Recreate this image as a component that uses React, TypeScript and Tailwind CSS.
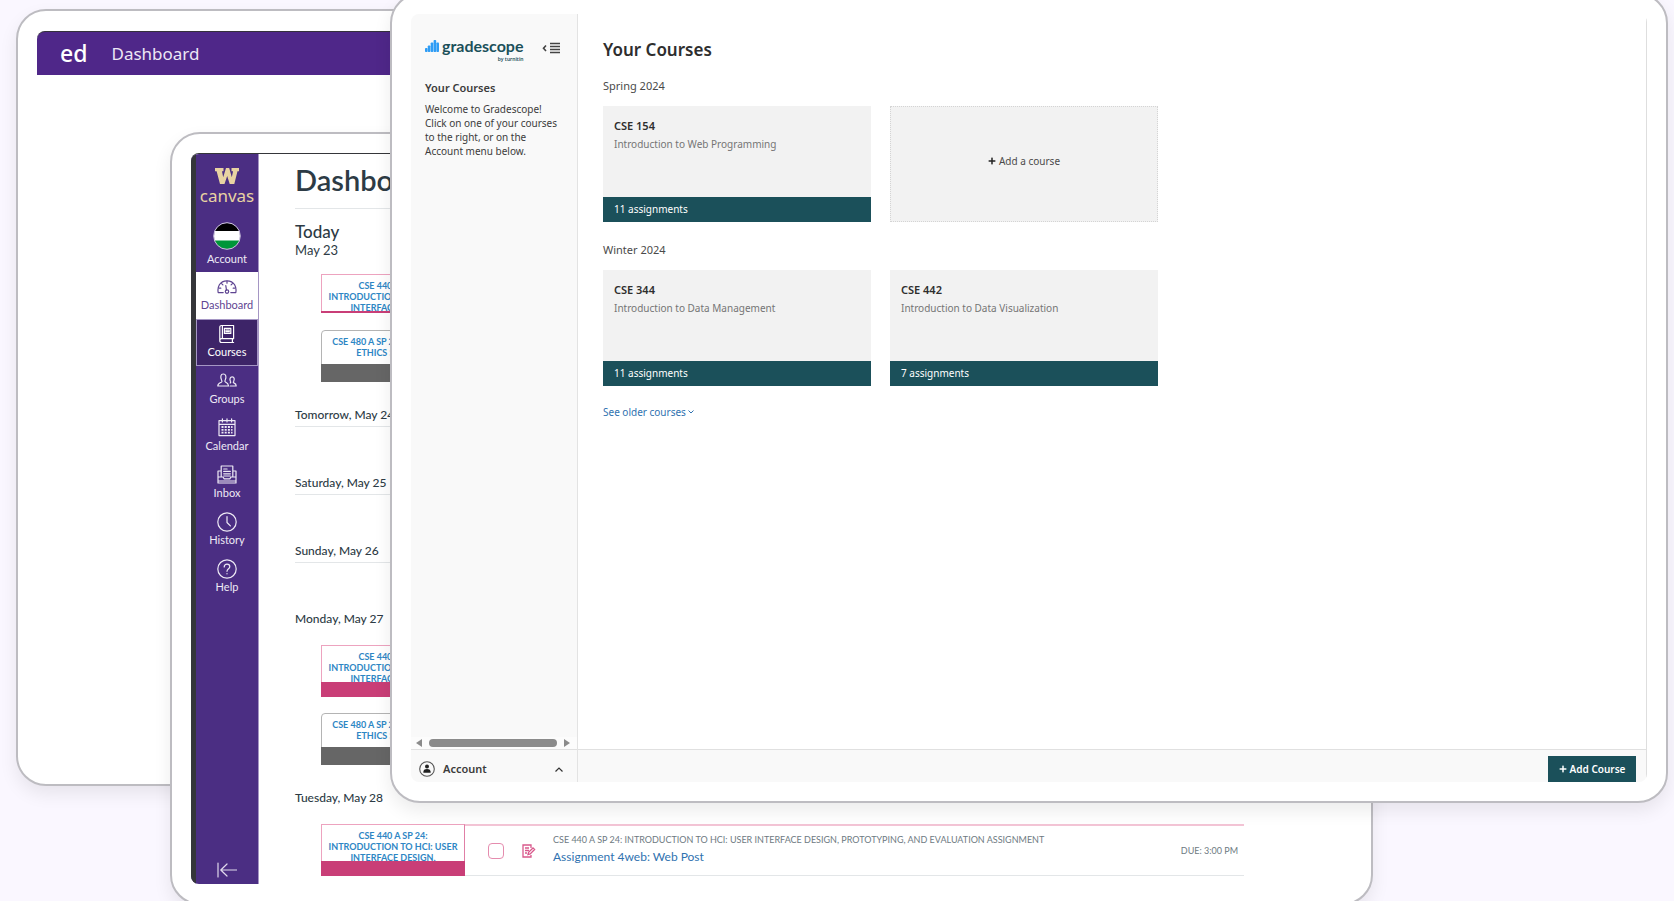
import type { ReactNode } from "react";
import { FaPlus } from "react-icons/fa";

const stroke = {
  fill: "none",
  stroke: "currentColor",
  strokeWidth: 1.2,
  strokeLinecap: "round" as const,
  strokeLinejoin: "round" as const,
};

function Glyph({ children }: { children: ReactNode }) {
  return (
    <svg viewBox="0 0 20 20" className="size-5" aria-hidden="true" {...stroke}>
      {children}
    </svg>
  );
}

const icons: Record<string, ReactNode> = {
  Dashboard: (
    <Glyph>
      <path d="M6.2 15.6H1.2C.2 10.500 2.400 3.800 10 3.800s9.800 6.700 8.800 11.800h-5" />
      <path d="M10 4v2.200M4.600 6.600l1.300 1.300M15.400 6.600l-1.300 1.300M2.400 11.200h1.400M17.600 11.200h-1.400M8.800 8.600l.7 4.600" />
      <circle cx="10" cy="14.600" r="1.700" />
    </Glyph>
  ),
  Courses: (
    <Glyph>
      <path d="M4.600 1.500h12v13.200H4.600a1.800 1.800 0 0 0-1.800 1.800V3.200c0-1 .8-1.700 1.800-1.700ZM2.800 16.500c0 1.200.8 2 1.800 2h12M15.400 14.700v3.800M5.400 1.500v13.200" />
      <path d="M7.400 4.400h6.400v5H7.400zM8.800 6.200h3.600M8.800 7.700h3.600" />
    </Glyph>
  ),
  Groups: (
    <Glyph>
      <path d="M11.600 15H.8c0-2.800 1.600-3 3.600-3.800 1-.5.6-1.400.2-2.200C3.200 6 3.600 3 6.300 3S9.600 6 8.200 9c-.4.800-.6 1.600.3 2.100 1.300.6 2.600.9 3.100 3.900Z" />
      <path d="M13.200 15h6c0-2.200-1-2.400-2.300-3-.9-.4-.6-1.100-.2-1.700 1-2.200.6-4.400-1.500-4.400s-2.800 2.200-1.800 4.400c.3.600.6 1.300-.2 1.700" />
    </Glyph>
  ),
  Calendar: (
    <Glyph>
      <path d="M2 2.600h16v15H2zM2 6.400h16M5.400 .8v3.100M10 .8v3.100M14.600 .8v3.100" />
      <path d="M4.500 9h11M4.500 11.800h11M4.500 14.700h11" strokeDasharray="2 1.200" strokeWidth="1.800" strokeLinecap="butt" />
    </Glyph>
  ),
  Inbox: (
    <Glyph>
      <path d="M4.200 12V1h11.600v11M4.200 6H1v12h18V6h-3.200M1 12h5l1.200 1.800h5.600L14 12h5M1 16h18" />
      <path d="M6.700 4h3.400M6.700 6.400h6.600M6.700 8.800h6.600M6.700 11h6.600" />
    </Glyph>
  ),
  History: (
    <Glyph>
      <circle cx="10" cy="10" r="9.200" />
      <path d="M10 4.500v6l3.400 3.400" />
    </Glyph>
  ),
  Help: (
    <Glyph>
      <circle cx="10" cy="10" r="9.200" />
      <path d="M7.200 8c0-1.800 1.200-2.800 2.800-2.800s2.800 1 2.800 2.500c0 2-2.800 2.200-2.800 4.600M10 14.600v.2" />
    </Glyph>
  ),
};

const navItems = ["Dashboard", "Courses", "Groups", "Calendar", "Inbox", "History", "Help"];

const navTone: Record<string, string> = {
  Dashboard: "bg-white text-[#5f4592]",
  Courses: "bg-[#3d2468] text-white ring-1 ring-inset ring-[#a596c4]",
};

function WLogo() {
  return (
    <svg viewBox="0 0 24 16" className="h-4 w-6" fill="#e8d3a2" aria-hidden="true">
      <path d="M0 0h8.500v3.300H7l1.200 6L11 0h3.200l2.600 9.300 1.300-6h-1.600V0H24v3.300h-1.500L19.300 16h-4.600l-2.500-8-2.700 8H5L1.600 3.300H0z" />
    </svg>
  );
}

const frame = "absolute overflow-hidden border-2 border-[#bdbcc1] bg-white shadow-[0_8px_18px_rgba(0,0,0,0.08)]";

function EdWindow() {
  return (
    <section className={`${frame} top-[9px] bottom-[115px] left-4 w-[70%] rounded-[30px] p-[19px] pt-5`}>
      <header className="flex h-[44px] items-center gap-6 rounded-t-lg border-t border-[#35313c] bg-[#4f2789] px-[23px] font-['Noto_Sans',sans-serif] text-white">
        <span className="text-[23px] font-medium">ed</span>
        <h1 className="text-[17px] text-[#ece6f5]">Dashboard</h1>
      </header>
    </section>
  );
}

const tileText = "overflow-hidden px-1 pt-[5px] text-center text-[9px] leading-[11px] font-bold text-[#2d86c4]";

function PinkTile({ short = false, full = false }: { short?: boolean; full?: boolean }) {
  return (
    <a
      href="#cse440"
      className={`flex w-36 shrink-0 flex-col border border-[#eda3bf] bg-white ${short ? "h-[39px]" : "h-[52px]"} ${full ? "border-r-[#e07fa6]" : ""}`}
    >
      <span className={`${tileText} min-h-0 flex-1`}>
        CSE 440 A SP 24:
        <br />
        INTRODUCTION TO HCI: USER INTERFACE DESIGN,
      </span>
      <span className={`-mx-px -mb-px bg-[#c93e77] ${short ? "h-0.5" : "h-[15px]"}`} />
    </a>
  );
}

function GrayTile() {
  return (
    <a href="#cse480" className="flex h-[52px] w-36 shrink-0 flex-col rounded-t-sm border border-[#b4b4b4] bg-white">
      <span className={`${tileText} min-h-0 flex-1`}>
        CSE 480 A SP 24: COMPUTER
        <br />
        ETHICS SEMINAR
      </span>
      <span className="-mx-px -mb-px h-[18px] bg-[#666666]" />
    </a>
  );
}

function DayHeading({ children, line = true }: { children: ReactNode; line?: boolean }) {
  return (
    <h3 className={`h-6 border-b text-xs leading-[23px] font-medium ${line ? "border-[#e3e6e8]" : "border-transparent"}`}>
      {children}
    </h3>
  );
}

function CanvasWindow() {
  return (
    <section className={`${frame} top-[132px] right-[301px] left-[170px] rounded-[30px] p-[19px] font-[Lato,sans-serif]`}>
      <div className="flex overflow-hidden rounded-l-lg border-t border-[#35363a]">
        <nav
          aria-label="Canvas"
          className="flex w-[68px] shrink-0 flex-col border-r border-l-[5px] border-r-[#a596c4] border-l-[#35363a] bg-[#4b2e83] text-[11px] text-white"
        >
          <div className="flex flex-col items-center pt-3.5 text-[#e8d3a2]">
            <WLogo />
            <span className="font-['Noto_Sans',sans-serif] text-[17px] leading-6">canvas</span>
          </div>
          <a href="#account" className="mt-3.5 flex h-[50px] flex-col items-center text-[#eeeaf5]">
            <svg viewBox="0 0 28 28" className="size-7" aria-hidden="true">
              <clipPath id="avatar-clip">
                <circle cx="14" cy="14" r="13" />
              </clipPath>
              <g clipPath="url(#avatar-clip)">
                <path fill="#000" d="M0 0h28v10H0z" />
                <path fill="#fff" d="M0 9h28v10H0z" />
                <path fill="#009639" d="M0 18.500h28V28H0z" />
              </g>
              <circle cx="14" cy="14" r="13.300" fill="none" stroke="#cfc7df" strokeWidth="1" />
            </svg>
            <span className="leading-[18px]">Account</span>
          </a>
          {navItems.map((item) => (
            <a key={item} href={`#${item}`} className={`flex h-[47px] flex-col items-center pt-[5px] ${navTone[item] ?? "text-[#eeeaf5]"}`}>
              {icons[item]}
              <span className="leading-4">{item}</span>
            </a>
          ))}
          <button type="button" aria-label="Minimize navigation" className="mt-auto mb-1 flex justify-center text-[#e0d9ec]">
            <svg viewBox="0 0 20 20" className="size-5" {...stroke}>
              <path d="M1 3v14M19.500 10H4M10 4l-6.200 6 6.200 6" />
            </svg>
          </button>
        </nav>
        <div className="flex-1 pr-[108px] pb-2 pl-9 text-[#2d3b45]">
          <h2 className="border-b border-[#e3e6e8] pt-1.5 pb-[9px] text-[29px] leading-[39px] font-semibold">
            Dashboard
          </h2>
          <h3 className="mt-3 text-[17px] leading-[22px] font-medium">Today</h3>
          <p className="text-[13px] leading-[14px]">May 23</p>
          <div className="mt-[17px] mb-[21px] flex flex-col gap-[17px] pl-[26px]">
            <PinkTile short />
            <GrayTile />
          </div>
          <div className="flex flex-col gap-11 pb-11">
            <DayHeading>Tomorrow, May 24</DayHeading>
            <DayHeading>Saturday, May 25</DayHeading>
            <DayHeading>Sunday, May 26</DayHeading>
          </div>
          <DayHeading line={false}>Monday, May 27</DayHeading>
          <div className="mt-3.5 mb-[21px] flex flex-col gap-4 pl-[26px]">
            <PinkTile />
            <GrayTile />
          </div>
          <DayHeading line={false}>Tuesday, May 28</DayHeading>
          <div className="mt-3.5 flex pl-[26px]">
            <PinkTile full />
            <div className="flex flex-1 items-center border-t-2 border-b border-t-[#f3c4d5] border-b-[#e3e6e8] pr-1.5">
              <input
                type="checkbox"
                aria-label="Assignment 4web: Web Post is done"
                className="ml-[23px] size-4 appearance-none rounded-sm border border-[#e58cae]"
              />
              <svg viewBox="0 0 16 16" className="ml-4 size-4" fill="none" stroke="#d9598c" strokeWidth="1.300" aria-hidden="true">
                <path d="M11 5V2H3v12h8v-2M5 5h4M5 7.500h4M5 10h2" />
                <path d="M8 11.500l.6-2.200L13 5l1.600 1.500-4.400 4.400z" />
              </svg>
              <div className="ml-[17px] flex-1 pb-[3px]">
                <p className="text-[9px] leading-4 text-[#6e7a82]">
                  CSE 440 A SP 24: INTRODUCTION TO HCI: USER INTERFACE DESIGN, PROTOTYPING, AND EVALUATION ASSIGNMENT
                </p>
                <a href="#assignment" className="block text-xs leading-[18px] text-[#2f72b0]">
                  Assignment 4web: Web Post
                </a>
              </div>
              <span className="text-[9px] text-[#6e7a82]">DUE: 3:00 PM</span>
            </div>
          </div>
        </div>
      </div>
    </section>
  );
}

function CourseCard({ code, title, count }: { code: string; title: string; count: number }) {
  return (
    <a href={`#${code}`} className="flex h-[116px] w-[268px] flex-col bg-[#f2f2f2]">
      <span className="px-[11px] pt-3 text-[11px] leading-4 font-semibold text-[#2e2e2e]">{code}</span>
      <span className="px-[11px] pt-0.5 text-[10px] leading-4 text-[#757575]">{title}</span>
      <span className="mt-auto h-[25px] bg-[#1b505a] px-[11px] text-[10px] leading-[25px] text-white">{count} assignments</span>
    </a>
  );
}

function GradescopeWindow() {
  return (
    <section className={`${frame} -top-[7px] right-1.5 bottom-[98px] left-[390px] rounded-[30px] p-[19px] font-['Noto_Sans',sans-serif]`}>
      <div className="flex h-full overflow-hidden rounded-lg">
        <aside className="flex w-[167px] shrink-0 flex-col border-r border-[#e3e3e3] bg-[#f9f9f9]">
          <div className="flex items-start justify-between pt-5 pr-[17px] pl-3.5">
            <a href="#home" className="flex flex-col items-end text-[#1b505a]">
              <span className="flex items-center gap-[3px]">
                <svg viewBox="0 0 14 12" className="h-3 w-3.5" fill="#2f9df5" aria-hidden="true">
                  <rect x="0" y="8" width="2.600" height="4" rx=".8" />
                  <rect x="2.800" y="5.500" width="2.600" height="6.500" rx=".8" />
                  <rect x="5.700" y="2.500" width="2.600" height="9.500" rx=".8" />
                  <rect x="8.600" y="0" width="2.600" height="12" rx=".8" />
                  <rect x="11.400" y="2.500" width="2.600" height="9.500" rx=".8" />
                </svg>
                <span className="font-[Lato,sans-serif] text-base leading-6 font-bold">gradescope</span>
              </span>
              <span className="-mt-0.5 text-[5px] leading-[6px] font-semibold">by turnitin</span>
            </a>
            <button type="button" aria-label="Collapse menu" className="mt-2 text-[#444444]">
              <svg viewBox="0 0 18 12" className="h-3 w-[18px]" fill="none" stroke="currentColor" strokeWidth="1.600">
                <path d="M4 3.500L1.500 6.200 4 9M8 1.500h10M8 4.500h10M8 7.500h10M8 10.500h10" />
              </svg>
            </button>
          </div>
          <div className="px-3.5 pt-[18px] text-[#3c3c3c]">
            <h2 className="text-[11px] leading-4 font-semibold">Your Courses</h2>
            <p className="pt-[6px] text-[10px] leading-[14px]">
              Welcome to Gradescope! Click on one of your courses to the right, or on the Account menu below.
            </p>
          </div>
          <div className="mt-auto flex h-3 items-center justify-between bg-[#fcfcfc] pr-[7px] pl-[5px]" aria-hidden="true">
            <svg viewBox="0 0 6 8" className="h-2 w-1.5" fill="#8b8b8b">
              <path d="M6 0v8L0 4z" />
            </svg>
            <div className="mx-[7px] h-2 flex-1 rounded-full bg-[#8b8b8b]" />
            <svg viewBox="0 0 6 8" className="h-2 w-1.5" fill="#8b8b8b">
              <path d="M0 0v8l6-4z" />
            </svg>
          </div>
          <button type="button" className="flex h-[33px] items-center border-t border-[#e0e0e0] pt-1.5 pr-3.5 pl-2 text-[#3c3c3c]">
            <svg viewBox="0 0 16 16" className="size-4" aria-hidden="true">
              <circle cx="8" cy="8" r="7.300" fill="none" stroke="#555" strokeWidth="1.100" />
              <circle cx="8" cy="5.600" r="2" fill="#222" />
              <path d="M4.300 11.700c0-2.600 1.200-3.700 3.700-3.700s3.700 1.100 3.700 3.700z" fill="#222" />
            </svg>
            <span className="ml-2 text-[11px] font-semibold">Account</span>
            <svg viewBox="0 0 8 5" className="ml-auto h-[5px] w-2" fill="none" stroke="#333" strokeWidth="1.200" aria-hidden="true">
              <path d="M.5 4.500L4 1l3.500 3.500" />
            </svg>
          </button>
        </aside>
        <div className="flex flex-1 flex-col border-r border-[#dedede]">
          <main className="flex-1 px-[25px] text-[#4a4a4a]">
            <h1 className="pt-6 text-[17px] leading-6 font-semibold text-[#2e2e2e]">Your Courses</h1>
            <h2 className="pt-4 pb-3 text-[11px] leading-4">Spring 2024</h2>
            <div className="flex flex-wrap gap-[19px]">
              <CourseCard code="CSE 154" title="Introduction to Web Programming" count={11} />
              <button
                type="button"
                className="flex h-[116px] w-[268px] items-center justify-center gap-[3px] border border-dotted border-[#d4d4d4] bg-[#f2f2f2] pb-1.5 text-[10px] text-[#4a4a4a]"
              >
                <FaPlus className="size-2 text-[#222222]" />
                Add a course
              </button>
            </div>
            <h2 className="pt-5 pb-3 text-[11px] leading-4">Winter 2024</h2>
            <div className="flex flex-wrap gap-[19px]">
              <CourseCard code="CSE 344" title="Introduction to Data Management" count={11} />
              <CourseCard code="CSE 442" title="Introduction to Data Visualization" count={7} />
            </div>
            <button type="button" className="mt-[18px] flex items-center gap-0.5 text-[10px] leading-4 text-[#2f72b0]">
              See older courses
              <svg viewBox="0 0 6 4" className="h-1 w-1.5" fill="none" stroke="currentColor" aria-hidden="true">
                <path d="M.5 .5L3 3 5.500 .5" />
              </svg>
            </button>
          </main>
          <footer className="flex h-[33px] items-end justify-end border-t border-[#e0e0e0] bg-[#f9f9f9] pr-2.5">
            <button type="button" className="flex h-[26px] w-[88px] items-center justify-center gap-[3px] bg-[#1b505a] text-[10px] font-semibold text-white">
              <FaPlus className="size-2" />
              Add Course
            </button>
          </footer>
        </div>
      </div>
    </section>
  );
}

export default function App() {
  return (
    <div className="relative min-h-screen overflow-hidden bg-[#faf7ff]">
      <EdWindow />
      <CanvasWindow />
      <GradescopeWindow />
    </div>
  );
}
